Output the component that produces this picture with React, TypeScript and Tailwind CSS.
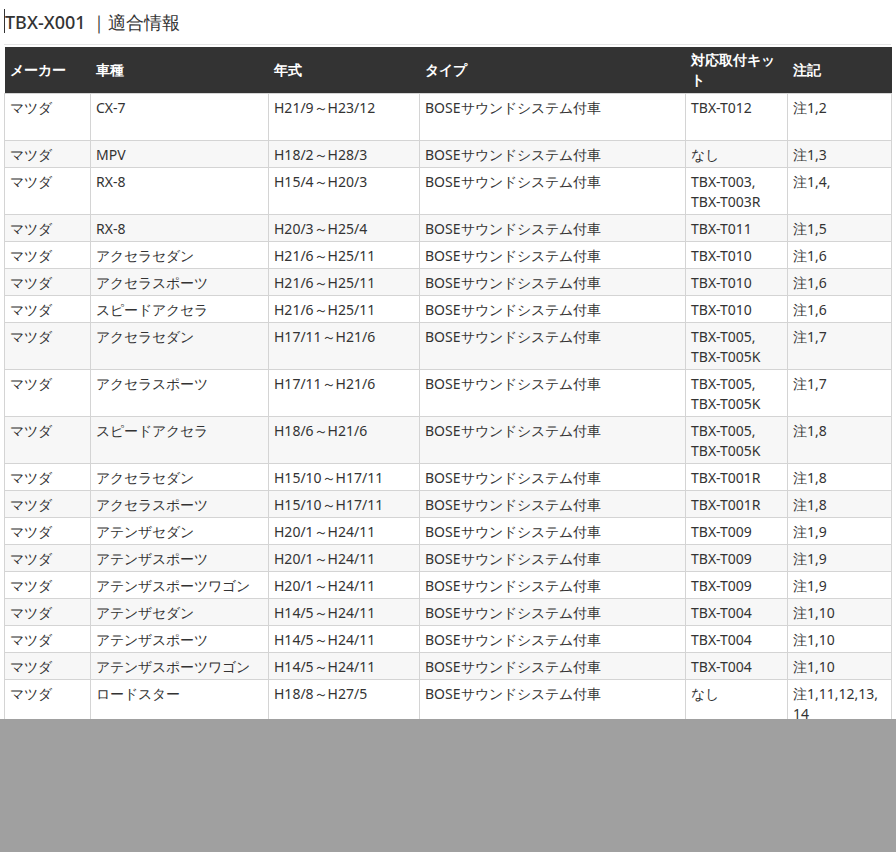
const ROWS: [string, string, string, string, string, string, boolean?][] = [
  ["マツダ", "CX-7", "H21/9～H23/12", "BOSEサウンドシステム付車", "TBX-T012", "注1,2", true],
  ["マツダ", "MPV", "H18/2～H28/3", "BOSEサウンドシステム付車", "なし", "注1,3"],
  ["マツダ", "RX-8", "H15/4～H20/3", "BOSEサウンドシステム付車", "TBX-T003,\nTBX-T003R", "注1,4,"],
  ["マツダ", "RX-8", "H20/3～H25/4", "BOSEサウンドシステム付車", "TBX-T011", "注1,5"],
  ["マツダ", "アクセラセダン", "H21/6～H25/11", "BOSEサウンドシステム付車", "TBX-T010", "注1,6"],
  ["マツダ", "アクセラスポーツ", "H21/6～H25/11", "BOSEサウンドシステム付車", "TBX-T010", "注1,6"],
  ["マツダ", "スピードアクセラ", "H21/6～H25/11", "BOSEサウンドシステム付車", "TBX-T010", "注1,6"],
  ["マツダ", "アクセラセダン", "H17/11～H21/6", "BOSEサウンドシステム付車", "TBX-T005,\nTBX-T005K", "注1,7"],
  ["マツダ", "アクセラスポーツ", "H17/11～H21/6", "BOSEサウンドシステム付車", "TBX-T005,\nTBX-T005K", "注1,7"],
  ["マツダ", "スピードアクセラ", "H18/6～H21/6", "BOSEサウンドシステム付車", "TBX-T005,\nTBX-T005K", "注1,8"],
  ["マツダ", "アクセラセダン", "H15/10～H17/11", "BOSEサウンドシステム付車", "TBX-T001R", "注1,8"],
  ["マツダ", "アクセラスポーツ", "H15/10～H17/11", "BOSEサウンドシステム付車", "TBX-T001R", "注1,8"],
  ["マツダ", "アテンザセダン", "H20/1～H24/11", "BOSEサウンドシステム付車", "TBX-T009", "注1,9"],
  ["マツダ", "アテンザスポーツ", "H20/1～H24/11", "BOSEサウンドシステム付車", "TBX-T009", "注1,9"],
  ["マツダ", "アテンザスポーツワゴン", "H20/1～H24/11", "BOSEサウンドシステム付車", "TBX-T009", "注1,9"],
  ["マツダ", "アテンザセダン", "H14/5～H24/11", "BOSEサウンドシステム付車", "TBX-T004", "注1,10"],
  ["マツダ", "アテンザスポーツ", "H14/5～H24/11", "BOSEサウンドシステム付車", "TBX-T004", "注1,10"],
  ["マツダ", "アテンザスポーツワゴン", "H14/5～H24/11", "BOSEサウンドシステム付車", "TBX-T004", "注1,10"],
  ["マツダ", "ロードスター", "H18/8～H27/5", "BOSEサウンドシステム付車", "なし", "注1,11,12,13,14"],
  ["マツダ", "", "", "", "", ""],
];

const HEAD = ["メーカー", "車種", "年式", "タイプ", "対応取付キット", "注記"];
const WIDTHS = ["w-[86px]", "w-[178px]", "w-[151px]", "w-[266px]", "w-[102px]", "w-[104px]"];

export default function App() {
  return (
    <div className="relative h-[852px] overflow-hidden bg-white text-[#333] font-['Noto_Sans_CJK_JP','Noto_Sans',sans-serif]">
      <div className="pl-[4px] pr-[5px]">
        <h2 className="h-[45px] pt-[9px] text-[18px] leading-[26px] font-medium border-b border-[#e5e5e5] flex">
          <span className="w-px h-[24px] bg-[#333]" />
          TBX-X001 ｜適合情報
        </h2>
        <table className="mt-[2px] w-[887px] table-fixed border-collapse text-[14px] leading-[20px]">
          <thead>
            <tr className="bg-[#333] text-white h-[46px]">
              {HEAD.map((h, i) => (
                <th key={i} className={`${WIDTHS[i]} text-left font-bold px-[5px] align-middle`}>{h}</th>
              ))}
            </tr>
          </thead>
          <tbody>
            {ROWS.map((r, i) => (
              <tr key={i} className={`${i % 2 ? "bg-[#f7f7f7]" : "bg-white"} ${r[6] ? "h-[47px]" : ""}`}>
                {r.slice(0, 6).map((c, j) => (
                  <td key={j} className="border border-[#d4d4d4] px-[5px] pt-[4px] pb-[2px] align-top whitespace-pre-line break-all">
                    {c as string}
                  </td>
                ))}
              </tr>
            ))}
          </tbody>
        </table>
      </div>
      <div className="absolute left-0 right-0 top-[719px] bottom-0 bg-[#a0a0a0]" />
    </div>
  );
}
